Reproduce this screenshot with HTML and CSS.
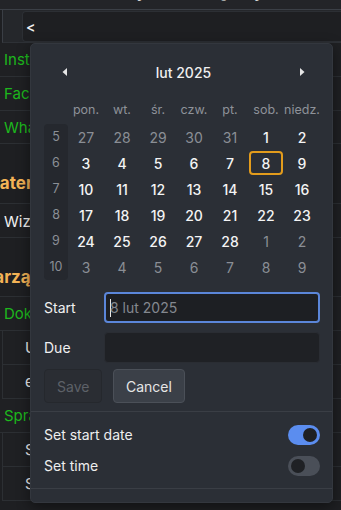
FILE: index.html
```html
<!DOCTYPE html>
<html lang="pl">
<head>
<meta charset="utf-8">
<title>Kalendarz</title>
<link rel="stylesheet" href="styles.css">
</head>
<body>
<div class="page">
  <div class="topbar"><span class="title">Szybkie linki grupy</span></div>
  <div class="search-row">
    <div class="search-box">&lt;</div>
  </div>
  <div class="row link">Instagram</div>
  <div class="row link">Facebook</div>
  <div class="row link last">WhatsApp</div>
  <div class="heading tall">Materiały</div>
  <div class="row plain">Wizytówki</div>
  <div class="heading">Zarządzanie</div>
  <div class="row link">Dokumenty</div>
  <div class="row sub">Umowy</div>
  <div class="row sub">e-mail</div>
  <div class="row link">Sprawy</div>
  <div class="row sub">Szablony</div>
  <div class="row sub">Spotkania</div>
</div>

<div class="popup">
  <div class="cal-head">
    <button class="nav" aria-label="Poprzedni miesiąc"><svg width="6" height="8" viewBox="0 0 6 8"><polygon points="5,0 5,8 0.5,4" fill="#e6e6e6"/></svg></button>
    <div class="month">lut 2025</div>
    <button class="nav" aria-label="Następny miesiąc"><svg width="6" height="8" viewBox="0 0 6 8"><polygon points="1,0 1,8 5.5,4" fill="#e6e6e6"/></svg></button>
  </div>
  <div class="dow">
    <span></span><span>pon.</span><span>wt.</span><span>śr.</span><span>czw.</span><span>pt.</span><span>sob.</span><span>niedz.</span>
  </div>
  <div class="cal-body">
    <div class="weeks">
      <span>5</span><span>6</span><span>7</span><span>8</span><span>9</span><span>10</span>
    </div>
    <div class="days">
      <span class="out">27</span><span class="out">28</span><span class="out">29</span><span class="out">30</span><span class="out">31</span><span>1</span><span>2</span>
      <span>3</span><span>4</span><span>5</span><span>6</span><span>7</span><span class="sel">8</span><span>9</span>
      <span>10</span><span>11</span><span>12</span><span>13</span><span>14</span><span>15</span><span>16</span>
      <span>17</span><span>18</span><span>19</span><span>20</span><span>21</span><span>22</span><span>23</span>
      <span>24</span><span>25</span><span>26</span><span>27</span><span>28</span><span class="out">1</span><span class="out">2</span>
      <span class="out">3</span><span class="out">4</span><span class="out">5</span><span class="out">6</span><span class="out">7</span><span class="out">8</span><span class="out">9</span>
    </div>
  </div>

  <div class="form">
    <div class="field">
      <label>Start</label>
      <div class="input focus"><span class="caret"></span><span class="ph">8 lut 2025</span></div>
    </div>
    <div class="field">
      <label>Due</label>
      <div class="input"></div>
    </div>
    <div class="buttons">
      <button class="btn disabled">Save</button>
      <button class="btn">Cancel</button>
    </div>
  </div>

  <div class="options">
    <div class="opt"><span>Set start date</span><span class="toggle on"><span class="knob"></span></span></div>
    <div class="opt"><span>Set time</span><span class="toggle"><span class="knob"></span></span></div>
  </div>
</div>
</body>
</html>
```

FILE: styles.css
```css
* { box-sizing: border-box; }
html, body {
  margin: 0;
  padding: 0;
  background: #1e1f22;
  font-family: Inter, "Noto Sans", sans-serif;
  color: #e8e8e8;
  overflow: hidden;
}
.page {
  width: 341px;
  height: 510px;
  background: #1e1f22;
}
.topbar {
  height: 10px;
  overflow: hidden;
  background: #232428;
  border-bottom: 1px solid #3b3f46;
  text-align: center;
  padding-left: 40px;
}
.topbar .title {
  display: block;
  font-size: 16px;
  font-weight: 600;
  line-height: 16px;
  margin-top: -17px;
  color: #ffffff;
}
.search-row {
  height: 33px;
  padding: 1px 0 1px 19px;
  border-left: 1px solid #3a3e45;
  margin-left: 2px;
  background: #25272b;
  border-bottom: 1px solid #2e3136;
}
.search-box {
  height: 31px;
  background: #1e1f22;
  border: 1px solid #2c2f34;
  border-right: none;
  border-radius: 4px 0 0 4px;
  font-size: 14px;
  line-height: 29px;
  padding-left: 3px;
  color: #f0f0f0;
  font-weight: 600;
}
.row {
  height: 34px;
  line-height: 33px;
  border-bottom: 1px solid #2c2f33;
  font-size: 15px;
  padding-left: 4px;
  background: #1f2023;
}
.row.link { color: #1db81d; }
.row.last { height: 33px; }
.row.plain { color: #f2f2f2; line-height: 35px; }
.row.sub {
  color: #f2f2f2;
  margin-left: 2px;
  border-left: 1px solid #2c2f33;
  padding-left: 22px;
}
.heading {
  height: 59px;
  display: flex;
  align-items: flex-end;
  padding-bottom: 9px;
  margin-left: -17px;
  font-size: 17px;
  font-weight: 700;
  color: #f3b356;
  border-bottom: 1px solid #2c2f33;
  background: #1e1f22;
}
.heading.tall { height: 60px; padding-bottom: 10px; margin-left: -16px; }

/* popup */
.popup {
  position: absolute;
  left: 30px;
  top: 43px;
  width: 303px;
  height: 460px;
  background: #2b2f36;
  border: 1px solid #33373e;
  border-radius: 5px;
  box-shadow: 0 4px 14px rgba(0, 0, 0, 0.45);
  padding: 11px 12px 0 13px;
}
.cal-head {
  display: flex;
  align-items: center;
  justify-content: space-between;
  height: 34px;
  padding: 0 6px 0 9px;
  margin-bottom: 7px;
}
.nav {
  width: 24px;
  height: 24px;
  display: flex;
  align-items: center;
  justify-content: center;
  background: none;
  border: none;
  padding: 0;
}
.month {
  font-size: 14px;
  color: #f0f0f0;
  font-weight: 500;
}
.dow {
  display: grid;
  grid-template-columns: 24px repeat(7, 36px);
  height: 26px;
  align-items: center;
  margin-bottom: 2px;
}
.dow span {
  text-align: center;
  font-size: 12.5px;
  color: #8e9299;
}
.cal-body {
  display: flex;
}
.weeks {
  width: 24px;
  background: #25282e;
  border-radius: 4px;
  display: flex;
  flex-direction: column;
}
.weeks span {
  height: 26px;
  line-height: 26px;
  text-align: center;
  font-size: 12.5px;
  color: #8b8f96;
}
.days {
  display: grid;
  grid-template-columns: repeat(7, 36px);
  grid-auto-rows: 26px;
}
.days span {
  display: flex;
  align-items: center;
  justify-content: center;
  font-size: 14px;
  font-weight: 500;
  color: #f4f4f4;
}
.days span.out {
  color: #8a8e95;
  font-weight: 400;
}
.days span.sel {
  margin: 1px;
  border: 2px solid #e39c1c;
  border-radius: 4px;
}

.form {
  margin-top: 12px;
  display: flex;
  flex-direction: column;
  gap: 9px;
}
.field {
  display: flex;
  align-items: center;
}
.field label {
  width: 60px;
  font-size: 14px;
  color: #f0f0f0;
}
.input {
  width: 216px;
  height: 31px;
  background: #1f2125;
  border: 1px solid #2a2d33;
  border-radius: 4px;
  display: flex;
  align-items: center;
  padding-left: 5px;
}
.input.focus {
  background: #1d1f23;
  border: 2px solid #5b86d9;
  padding-left: 4px;
}
.caret {
  width: 1px;
  height: 18px;
  background: #e8e8e8;
}
.ph {
  font-size: 14px;
  color: #84888f;
  margin-left: -1px;
}
.buttons {
  display: flex;
  gap: 11px;
  margin-top: -3px;
}
.btn {
  height: 34px;
  padding: 0 12px;
  font-family: Inter, "Noto Sans", sans-serif;
  font-size: 14px;
  border-radius: 4px;
  background: #3b4048;
  border: 1px solid #4b5058;
  color: #e6e6e6;
}
.btn.disabled {
  width: 58px;
  background: #2a2d33;
  border-color: #25282d;
  color: #5d6168;
}

.options {
  margin: 8px -12px 0 -13px;
  border-top: 1px solid #3a3e45;
  border-bottom: 1px solid #3a3e45;
  padding: 7px 12px 7px 13px;
}
.opt {
  height: 31px;
  display: flex;
  align-items: center;
  justify-content: space-between;
  font-size: 14px;
  color: #eeeeee;
}
.toggle {
  width: 32px;
  height: 20px;
  border-radius: 10px;
  background: #4a4f58;
  display: flex;
  align-items: center;
  padding: 0 3px;
}
.toggle.on {
  background: #5b8def;
  justify-content: flex-end;
}
.knob {
  width: 14px;
  height: 14px;
  border-radius: 50%;
  background: #1f2125;
}
```
